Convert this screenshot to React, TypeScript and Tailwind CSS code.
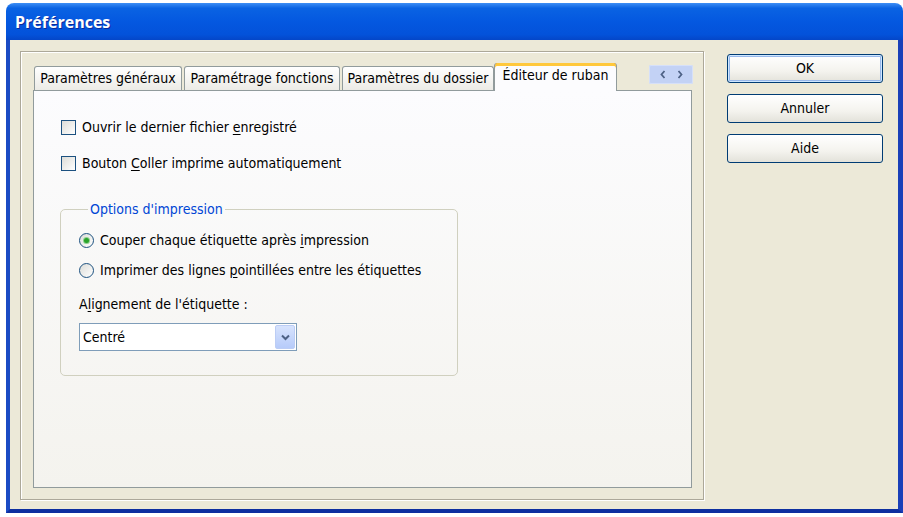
import React from 'react';

const uiFont = { fontFamily: '"DejaVu Sans Condensed", "Liberation Sans", Arial, sans-serif' };

function Checkbox({ children }: { children: React.ReactNode }) {
  return (
    <div className="flex h-[16px] items-center">
      <span className="h-[15px] w-[15px] border border-[#1c5180] bg-[linear-gradient(135deg,#dcdcd7,#ffffff)]" />
      <span className="ml-[6px] text-[14px] leading-[16px] text-black">{children}</span>
    </div>
  );
}

function Radio({ checked, children }: { checked?: boolean; children: React.ReactNode }) {
  return (
    <div className="flex h-[16px] items-center">
      <span className="flex h-[15px] w-[15px] items-center justify-center rounded-full border border-[#1c5180] bg-[linear-gradient(135deg,#dcdcd7,#ffffff)]">
        {checked && <span className="h-[5px] w-[5px] rounded-full bg-[#2aa32a] shadow-[0_0_0_1px_#8ed08e]" />}
      </span>
      <span className="ml-[6px] text-[14px] leading-[16px] text-black">{children}</span>
    </div>
  );
}

function Tab({ label, width, active }: { label: string; width: string; active?: boolean }) {
  if (active) {
    return (
      <div
        className={`relative z-10 -mb-px flex h-[28px] ${width} items-center justify-center rounded-t-[3px] border-x border-[#919b9c] bg-[#fcfcfe] pb-[3px] text-[14px] text-black shadow-[inset_0_3px_0_#ffc83c,inset_0_1px_0_#e68b2c]`}
      >
        {label}
      </div>
    );
  }
  return (
    <div
      className={`flex h-[24px] ${width} items-center justify-center rounded-t-[3px] border-x border-t border-[#919b9c] bg-[linear-gradient(to_bottom,#ffffff,#ecebe6)] text-[14px] text-black`}
    >
      {label}
    </div>
  );
}

function XpButton({ label, isDefault }: { label: string; isDefault?: boolean }) {
  return (
    <div
      className={`flex h-[29px] w-[156px] items-center justify-center rounded-[3px] border border-[#003c74] bg-[linear-gradient(to_bottom,#ffffff,#f4f3ee_60%,#e3e2da)] text-[14px] text-black ${
        isDefault ? 'shadow-[inset_0_0_0_1px_#cee7ff,inset_0_0_0_2px_#98b8ea]' : ''
      }`}
    >
      {label}
    </div>
  );
}

function Chevron({ dir }: { dir: 'left' | 'right' }) {
  return (
    <svg width="6" height="9" viewBox="0 0 6 9">
      <path
        d={dir === 'left' ? 'M4.5 1L1.5 4.5 4.5 8' : 'M1.5 1L4.5 4.5 1.5 8'}
        fill="none"
        stroke="#4d6185"
        strokeWidth="1.8"
      />
    </svg>
  );
}

export default function App() {
  return (
    <div className="h-[517px] w-[903px] bg-white pl-[6px] pt-[3px]" style={uiFont}>
      <div className="flex h-[510px] w-[897px] flex-col overflow-hidden rounded-t-[8px]">
        {/* title bar */}
        <div className="flex h-[37px] items-center bg-[linear-gradient(to_bottom,#3d8ef5_0%,#0a63e3_14%,#0458e0_50%,#0352da_85%,#0446c8_100%)] pl-[9px] pt-px">
          <span
            className="text-[16px] font-bold text-white [text-shadow:1px_1px_0_#0b2a9a]"
            style={{ fontFamily: '"Open Sans", "DejaVu Sans", sans-serif' }}
          >
            Préférences
          </span>
        </div>

        {/* body */}
        <div className="flex flex-1 border-b-4 border-l-4 border-r-[5px] border-b-[#0d2f9f] border-l-[#1a4bc4] border-r-[#1a3fb8] bg-[#ece9d8] pl-[10px] pt-[11px]">
          {/* etched panel */}
          <div className="flex h-[449px] w-[684px] flex-col border border-[#aca899] pl-[12px] pt-[11px] shadow-[inset_1px_1px_0_#ffffff,1px_1px_0_#ffffff]">
            {/* tab strip */}
            <div className="flex h-[27px] w-[659px] items-end pl-px">
              <Tab label="Paramètres généraux" width="w-[148px]" />
              <div className="w-[2px]" />
              <Tab label="Paramétrage fonctions" width="w-[156px]" />
              <div className="w-[2px]" />
              <Tab label="Paramètres du dossier" width="w-[152px]" />
              <Tab label="Éditeur de ruban" width="w-[123px]" active />
              <div className="ml-auto mr-[-1px] mt-[2px] flex h-[19px] w-[44px] items-center justify-center gap-[11px] self-start rounded-[2px] bg-[#c3d2f5] shadow-[inset_0_0_0_1px_#d6e0f9]">
                <Chevron dir="left" />
                <Chevron dir="right" />
              </div>
            </div>

            {/* tab page */}
            <div className="flex h-[398px] w-[659px] flex-col border border-[#919b9c] bg-[linear-gradient(to_bottom,#fcfcfe,#f4f3ee)] pl-[27px] pt-[28px]">
              <Checkbox>
                Ouvrir le dernier fichier <span className="underline underline-offset-2">e</span>nregistré
              </Checkbox>
              <div className="mt-[20px]">
                <Checkbox>
                  Bouton <span className="underline underline-offset-2">C</span>oller imprime automatiquement
                </Checkbox>
              </div>

              <fieldset className="-ml-px mt-[30px] w-[398px] rounded-[5px] border border-[#d0d0bf] pb-[24px] pl-[18px]">
                <legend className="ml-[9px] px-[2px] text-[14px] leading-[16px] text-[#0046d5]">Options d'impression</legend>
                <div className="mt-[15px]">
                  <Radio checked>
                    Couper chaque étiquette après <span className="underline underline-offset-2">i</span>mpression
                  </Radio>
                </div>
                <div className="mt-[14px]">
                  <Radio>
                    Imprimer des lignes <span className="underline underline-offset-2">p</span>ointillées entre les étiquettes
                  </Radio>
                </div>
                <div className="mt-[18px] h-[16px] text-[14px] leading-[16px] text-black">
                  A<span className="underline underline-offset-2">l</span>ignement de l'étiquette :
                </div>
                <div className="mt-[11px] flex h-[28px] w-[218px] items-center justify-between border border-[#7f9db9] bg-white pl-[3px] pr-px">
                  <span className="text-[14px] text-black">Centré</span>
                  <span className="flex h-[24px] w-[20px] items-center justify-center rounded-[2px] border border-[#bccdf5] bg-[linear-gradient(to_bottom,#d7e3fd,#b6cbfa)]">
                    <svg width="9" height="7" viewBox="0 0 9 7">
                      <path d="M1 1.5l3.5 3.5 3.5-3.5" fill="none" stroke="#4d6185" strokeWidth="2" />
                    </svg>
                  </span>
                </div>
              </fieldset>
            </div>
          </div>

          {/* buttons */}
          <div className="ml-[23px] mt-[3px] flex flex-col gap-[11px]">
            <XpButton label="OK" isDefault />
            <XpButton label="Annuler" />
            <XpButton label="Aide" />
          </div>
        </div>
      </div>
    </div>
  );
}
